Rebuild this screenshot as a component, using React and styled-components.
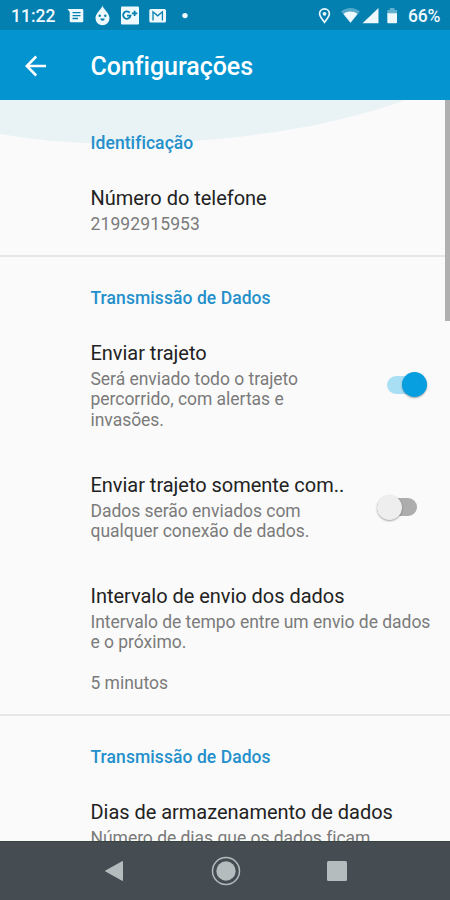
import styled, { createGlobalStyle } from "styled-components"

const GlobalStyle = createGlobalStyle`
	* {
		box-sizing: border-box;
	}
	body {
		margin: 0;
		font-family: Roboto, "Liberation Sans", sans-serif;
		background: #fafafa;
	}
`

const Screen = styled.div`
	width: 450px;
	height: 900px;
	display: flex;
	flex-direction: column;
	overflow: hidden;
	background: #fafafa;
`

const StatusBar = styled.div`
	height: 30px;
	flex: none;
	display: flex;
	align-items: center;
	justify-content: space-between;
	padding: 2px 10px 0 11px;
	background: #037fb0;
	color: #eef9fd;
	font-size: 17.5px;
	font-weight: 500;
	line-height: 28px;
`

const StatusGroup = styled.div`
	display: flex;
	align-items: center;
	svg {
		display: block;
		flex: none;
	}
`

const Clock = styled.span`
	width: 56px;
`

const Battery = styled.span`
	margin-left: 8px;
	letter-spacing: -0.3px;
`

const Toolbar = styled.header`
	height: 70px;
	flex: none;
	display: flex;
	align-items: center;
	padding: 3px 25px 0;
	background: #0495d0;
	color: #fff;
	svg {
		display: block;
		margin-top: -2px;
	}
	h1 {
		margin: 0 0 0 43.5px;
		font-size: 25px;
		font-weight: 500;
		line-height: 30px;
		letter-spacing: -0.04px;
	}
`

const Content = styled.main`
	height: 741px;
	flex: none;
	overflow: hidden;
	position: relative;
`

const Wave = styled.svg`
	position: absolute;
	top: 0;
	left: 0;
`

const Scrollbar = styled.div`
	position: absolute;
	top: 0;
	right: 0;
	width: 5px;
	height: 221px;
	background: #b0b0b0;
`

const Row = styled.div`
	display: flex;
	align-items: center;
	justify-content: space-between;
	padding: 21px 20px 21.5px 90.5px;
`

const Section = styled.section`
	position: relative;
	padding-top: ${(props) => (props.$divided ? "31px" : "33px")};
	border-top: ${(props) => (props.$divided ? "2px solid #e6e6e6" : "none")};
	${Row}:last-child {
		padding-bottom: 21px;
	}
`

const Heading = styled.h2`
	margin: 0 0 11.5px 90.5px;
	font-size: 17.5px;
	font-weight: 500;
	line-height: 20.5px;
	letter-spacing: 0.07px;
	color: #2490cb;
`

const Texts = styled.div`
	width: ${(props) => (props.$narrow ? "254px" : "344px")};
	flex: none;
`

const Title = styled.div`
	font-size: 20px;
	line-height: 24px;
	color: #222;
	white-space: nowrap;
	letter-spacing: -0.03px;
`

const Summary = styled.div`
	margin-top: 3.8px;
	font-size: 17.5px;
	line-height: 20.4px;
	color: #7b7b7b;
	white-space: pre;
	letter-spacing: ${(props) => props.$tracking || "-0.03px"};
`

const Track = styled.div`
	width: 40px;
	height: 18px;
	flex: none;
	display: flex;
	align-items: center;
	justify-content: ${(props) => (props.$on ? "flex-end" : "flex-start")};
	margin-right: ${(props) => (props.$on ? "3.5px" : "13.5px")};
	margin-bottom: ${(props) => (props.$on ? "2px" : "0")};
	border-radius: 9px;
	background: ${(props) => (props.$on ? "#a9dff4" : "#adadad")};
`

const Thumb = styled.div`
	width: 25px;
	height: 25px;
	flex: none;
	border-radius: 50%;
	background: ${(props) => (props.$on ? "#079fdf" : "#eeeeee")};
	box-shadow: 0 1px 2px rgba(0, 0, 0, 0.35);
`

const NavBar = styled.nav`
	height: 59px;
	flex: none;
	display: flex;
	align-items: center;
	justify-content: center;
	background: #454d52;
	border-top: 1px solid #35443f;
	padding-left: 1px;
`

const NavButton = styled.div`
	width: 111px;
	display: flex;
	justify-content: center;
`

function Switch({ on }) {
	return (
		<Track $on={on}>
			<Thumb $on={on} />
		</Track>
	)
}

function Item({ title, summary, tracking, toggle, on }) {
	return (
		<Row>
			<Texts $narrow={toggle}>
				<Title>{title}</Title>
				<Summary $tracking={tracking}>{summary}</Summary>
			</Texts>
			{toggle && <Switch on={on} />}
		</Row>
	)
}

function NotificationIcons() {
	return (
		<svg width="126" height="22" viewBox="67 5 126 22" fill="#eef9fd">
			{/* message */}
			<path d="M67.500 9H82a1.300 1.300 0 0 1 1.300 1.300V21A1.300 1.300 0 0 1 82 22.300H71A1.300 1.300 0 0 1 69.700 21V12Z" />
			<path d="M72.500 12.700h8M72.500 15.600h8M72.500 18.500h5.500" stroke="#037fb0" strokeWidth="1.300" />
			{/* drop with a face */}
			<path d="M102.500 5.500c.5 3.300 7 7.500 7 12.800a7 7 0 0 1-14 0c0-5.300 6.500-9.500 7-12.800Z" />
			<circle cx="99.700" cy="15.700" r="1.200" fill="#037fb0" />
			<circle cx="105.300" cy="15.700" r="1.200" fill="#037fb0" />
			<path d="M100.300 18.500h4.400a2.200 2.200 0 0 1-4.400 0Z" fill="#037fb0" />
			{/* G+ */}
			<rect x="121" y="6.500" width="18" height="18" rx="1" />
			<path
				d="M129.700 12.700a3.700 3.700 0 1 0 .8 3h-3.500M134.600 10.700v5.400M131.900 13.400h5.400"
				fill="none"
				stroke="#037fb0"
				strokeWidth="1.800"
			/>
			{/* mail */}
			<rect x="149.300" y="9" width="16.700" height="13.500" rx="1.500" />
			<path
				d="M153 20.500v-8.700l4.700 4 4.700-4v8.700"
				fill="none"
				stroke="#037fb0"
				strokeWidth="1.300"
			/>
			<circle cx="185" cy="15.600" r="2.700" />
		</svg>
	)
}

function SystemIcons() {
	return (
		<svg width="84" height="22" viewBox="316 5 84 22" fill="#eef9fd">
			<path
				d="M324.500 22.300c-3-4-4.900-6-4.900-8.500a4.900 4.900 0 0 1 9.800 0c0 2.500-1.900 4.500-4.900 8.500Z"
				fill="none"
				stroke="#eef9fd"
				strokeWidth="1.700"
			/>
			<circle cx="324.500" cy="13.800" r="1.900" />
			<path d="M341 11.500c5.500-4.700 13.500-4.700 19 0L350.500 22.800Z" opacity="0.35" />
			<path d="M343.500 14c4-3.200 10-3.200 14 0l-7 8.800Z" />
			<path d="M378.500 8v15.300h-16Z" />
			<path d="M387.300 10h2.500V8h4.700v2h2.500v4h-9.700Z" opacity="0.4" />
			<path d="M387.300 13.200h9.700v9a1 1 0 0 1-1 1h-7.700a1 1 0 0 1-1-1Z" />
		</svg>
	)
}

function App() {
	return (
		<>
			<GlobalStyle />
			<Screen>
				<StatusBar>
					<StatusGroup>
						<Clock>11:22</Clock>
						<NotificationIcons />
					</StatusGroup>
					<StatusGroup>
						<SystemIcons />
						<Battery>66%</Battery>
					</StatusGroup>
				</StatusBar>
				<Toolbar>
					<svg width="22" height="22" viewBox="0 0 22 22" fill="none" stroke="#fff" strokeWidth="2.500">
						<path d="M21 11H3M11.200 1.500 1.800 11l9.400 9.500" />
					</svg>
					<h1>Configurações</h1>
				</Toolbar>
				<Content>
					<Wave width="450" height="60" viewBox="0 0 450 60">
						<path d="M0 0H405C340 24 245 43 110 44C70 43 35 40 0 34Z" fill="#e9f2f5" />
					</Wave>
					<Section>
						<Heading>Identificação</Heading>
						<Item title="Número do telefone" summary="21992915953" tracking="0.12px" />
					</Section>
					<Section $divided>
						<Heading>Transmissão de Dados</Heading>
						<Item
							title="Enviar trajeto"
							summary={"Será enviado todo o trajeto\npercorrido, com alertas e\ninvasões."}
							toggle
							on
						/>
						<Item
							title="Enviar trajeto somente com.."
							summary={"Dados serão enviados com\nqualquer conexão de dados."}
							toggle
						/>
						<Item
							title="Intervalo de envio dos dados"
							summary={"Intervalo de tempo entre um envio de dados\ne o próximo.\n\n5 minutos"}
						/>
					</Section>
					<Section $divided>
						<Heading>Transmissão de Dados</Heading>
						<Item title="Dias de armazenamento de dados" summary="Número de dias que os dados ficam" />
					</Section>
					<Scrollbar />
				</Content>
				<NavBar>
					<NavButton>
						<svg width="22" height="22" viewBox="0 0 22 22">
							<path d="M18.500 1.500v19L1.500 11Z" fill="#b4bcbd" stroke="#b4bcbd" strokeLinejoin="round" />
						</svg>
					</NavButton>
					<NavButton>
						<svg width="30" height="30" viewBox="0 0 30 30">
							<circle cx="15" cy="15" r="13.500" fill="none" stroke="#b4bcbd" strokeWidth="1.500" />
							<circle cx="15" cy="15" r="9.700" fill="#b4bcbd" />
						</svg>
					</NavButton>
					<NavButton>
						<svg width="20" height="20" viewBox="0 0 20 20">
							<rect width="20" height="20" rx="1.500" fill="#b4bcbd" />
						</svg>
					</NavButton>
				</NavBar>
			</Screen>
		</>
	)
}

export default App
